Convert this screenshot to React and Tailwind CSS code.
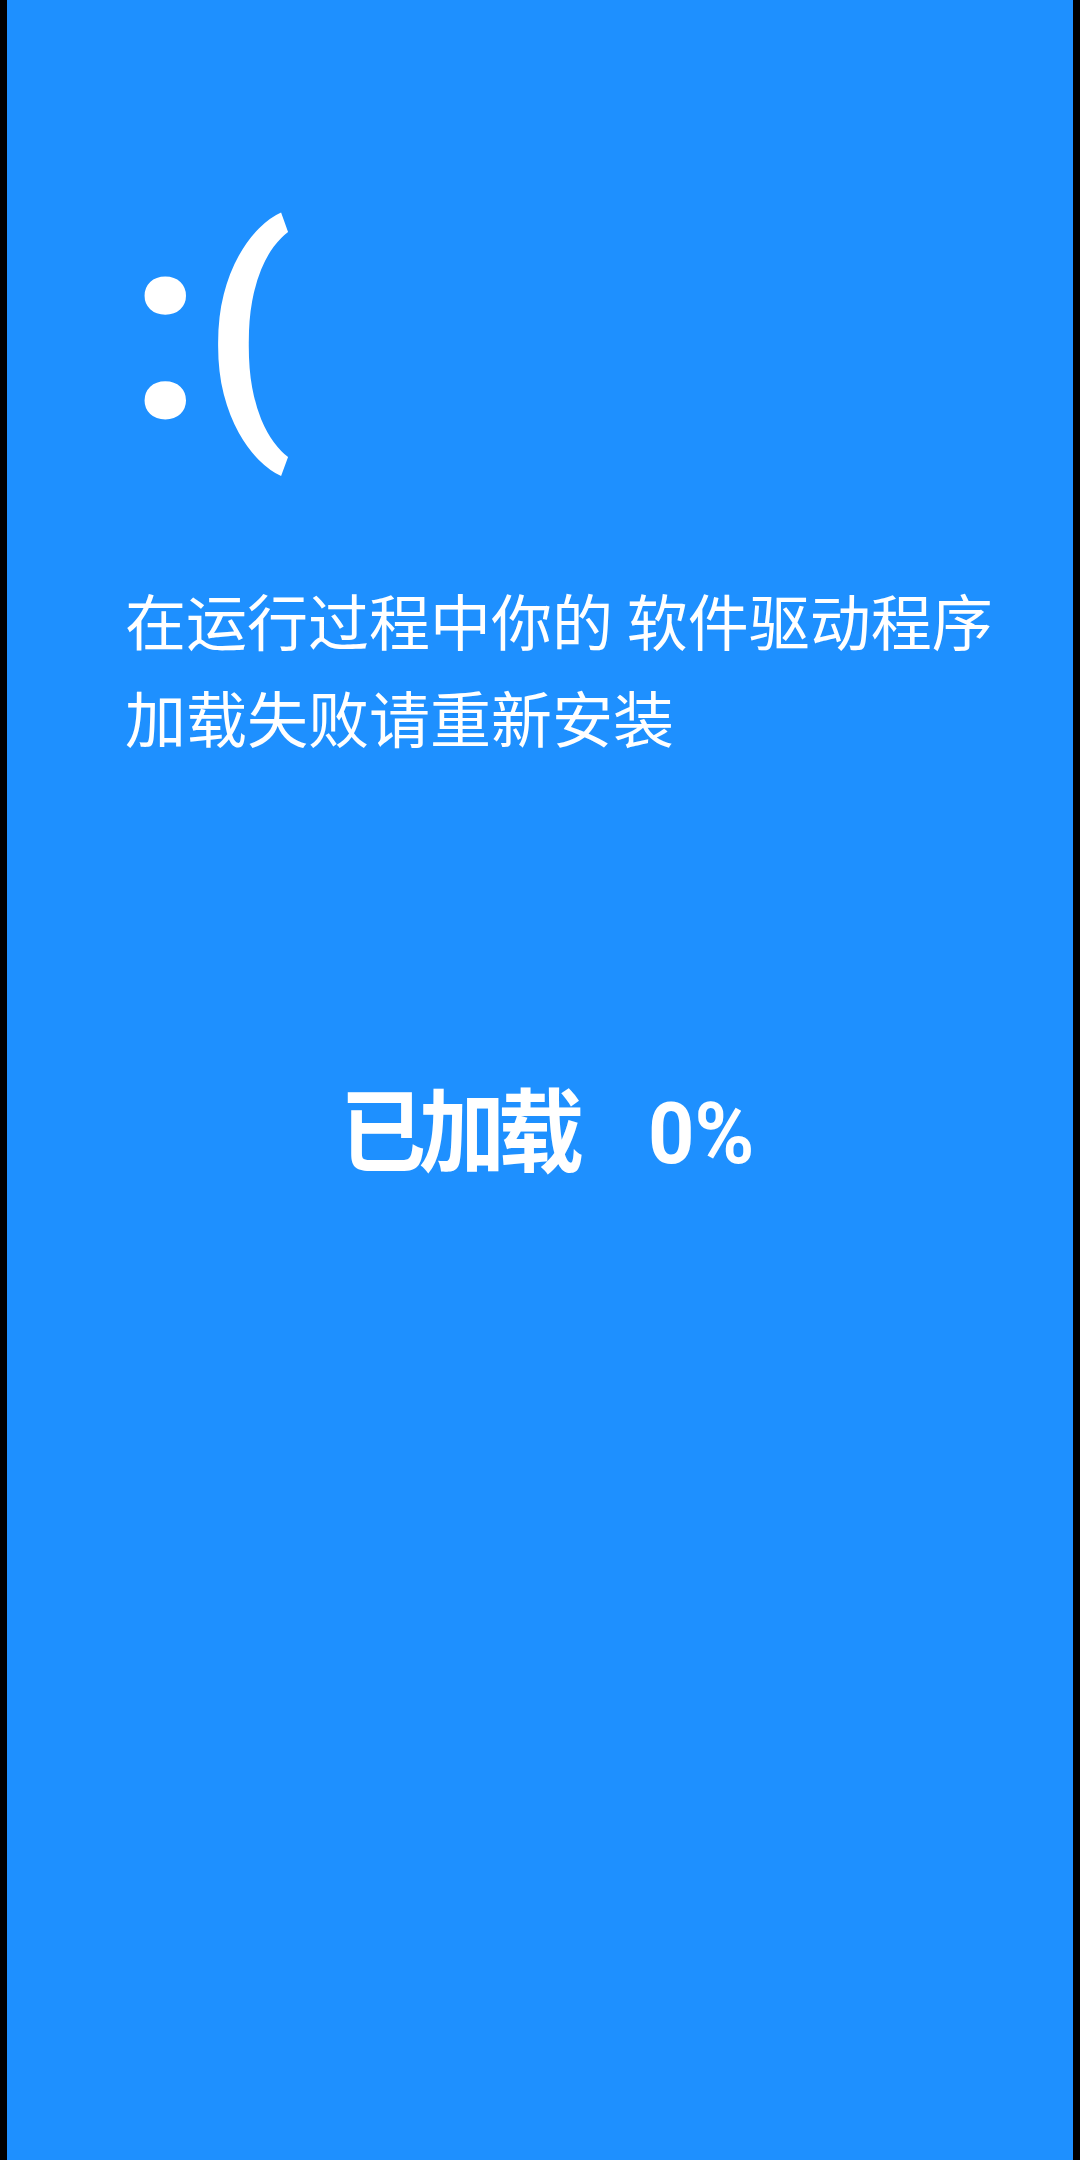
export default function App() {
  return (
    <div className="w-[1080px] h-[2160px] bg-black flex">
      <div className="ml-[7px] mr-[7px] flex-1 bg-[#1e90ff] text-white flex flex-col font-['Roboto','Noto_Sans_CJK_SC',sans-serif]">
        <div className="pt-[199px] pl-[122px] h-[520px] text-[260px] leading-[260px] font-bold">
          :(
        </div>
        <div className="pl-[118px] text-[61px] leading-[97px] mt-[51px] font-['Noto_Sans_CJK_SC',sans-serif]">
          <div>在运行过程中你的 软件驱动程序</div>
          <div>加载失败请重新安装</div>
        </div>
        <div className="mt-[326px] pl-[333px] flex items-center gap-[71px] text-[86px] leading-[86px] font-bold scale-y-[1.06]">
          <span className="tracking-[-7px]">已加载</span>
          <span className="text-[81px]">0%</span>
        </div>
      </div>
    </div>
  );
}
